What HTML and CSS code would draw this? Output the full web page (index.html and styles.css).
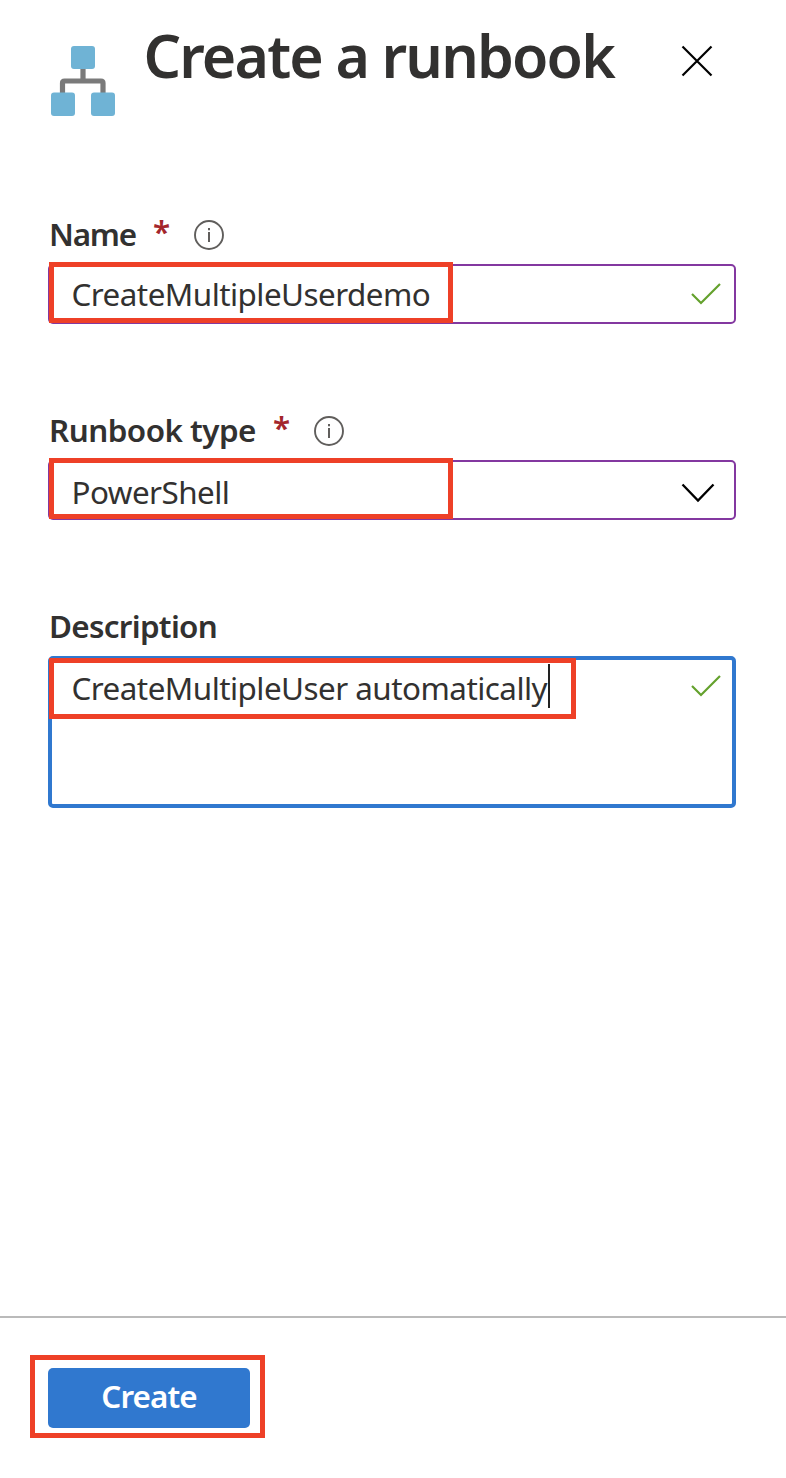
FILE: index.html
```html
<!DOCTYPE html>
<html lang="en">
<head>
<meta charset="utf-8">
<title>Create a runbook</title>
<link rel="stylesheet" href="styles.css">
</head>
<body>
<main class="panel">
  <header class="header">
    <svg class="logo" width="66" height="72" viewBox="0 0 66 72">
      <path d="M33 22V38M12.500 50V38Q12.500 36 14.500 36H51Q53 36 53 38V50" fill="none" stroke="#7a7a7a" stroke-width="5.200"/>
      <g fill="#6fb3d5">
        <rect x="21" y="1" width="24" height="23" rx="3"/>
        <rect x="1" y="47.500" width="24" height="23.500" rx="3"/>
        <rect x="41" y="47.500" width="24" height="23.500" rx="3"/>
      </g>
    </svg>
    <h1 class="title">Create a runbook</h1>
    <button class="close" aria-label="Close">
      <svg width="32" height="32" viewBox="0 0 32 32"><path d="M1.500 1.500L30.500 30.500M30.500 1.500L1.500 30.500" fill="none" stroke="#000" stroke-width="2.200"/></svg>
    </button>
  </header>
  <form class="form">
    <div class="field">
      <div class="label"><span class="label-name">Name</span><span class="required">*</span>
        <svg class="info" width="30" height="30" viewBox="0 0 30 30"><circle cx="15" cy="15" r="14" fill="none" stroke="#605e5c" stroke-width="1.900"/><path d="M15 12V22M15 8V10.300" stroke="#605e5c" stroke-width="2"/></svg>
      </div>
      <div class="control">
        <span class="value value-name">CreateMultipleUserdemo</span>
        <svg class="check" width="30" height="22" viewBox="0 0 30 22"><path d="M1 11L10 20L29 1" fill="none" stroke="#64a12d" stroke-width="2.200"/></svg>
        <span class="mark"></span>
      </div>
    </div>
    <div class="field">
      <div class="label"><span class="label-type">Runbook type</span><span class="required">*</span>
        <svg class="info" width="30" height="30" viewBox="0 0 30 30"><circle cx="15" cy="15" r="14" fill="none" stroke="#605e5c" stroke-width="1.900"/><path d="M15 12V22M15 8V10.300" stroke="#605e5c" stroke-width="2"/></svg>
      </div>
      <div class="control select">
        <span class="value value-type">PowerShell</span>
        <svg class="chevron" width="34" height="20" viewBox="0 0 34 20"><path d="M1.500 1.500L17 17.500L32.500 1.500" fill="none" stroke="#000" stroke-width="2.300"/></svg>
        <span class="mark"></span>
      </div>
    </div>
    <div class="field">
      <div class="label"><span class="label-desc">Description</span></div>
      <div class="control area">
        <span class="value value-desc">CreateMultipleUser automatically</span>
        <svg class="check" width="30" height="22" viewBox="0 0 30 22"><path d="M1 11L10 20L29 1" fill="none" stroke="#64a12d" stroke-width="2.200"/></svg>
        <span class="mark mark-wide"></span>
        <span class="caret"></span>
      </div>
    </div>
  </form>
  <footer class="footer">
    <div class="action-mark"><button class="create"><span class="create-text">Create</span></button></div>
  </footer>
</main>
</body>
</html>
```
FILE: styles.css
```css
* { box-sizing: border-box; }
body {
  margin: 0;
  background: #fff;
  color: #323130;
  font-family: "Noto Sans", "Open Sans", sans-serif;
  font-size: 31.4px;
}
svg { display: block; flex: none; }
button { border: 0; padding: 0; font: inherit; background: none; }
.panel { display: flex; flex-direction: column; width: 786px; height: 1478px; overflow: hidden; }
.header { display: flex; align-items: flex-start; height: 204px; padding: 0 73px 0 50px; }
.logo { margin-top: 45px; }
.title {
  margin: 15px 0 0 27.5px;
  font-size: 59px;
  font-weight: 600;
  line-height: 80px;
  letter-spacing: -1.85px;
  white-space: nowrap;
}
.close { margin: 45px 0 0 auto; }
.form { display: flex; flex: 1; flex-direction: column; gap: 76px; padding: 0 50px 0 48px; }
.label { display: flex; align-items: center; height: 60px; padding: 0 0 2px 1px; font-weight: 600; white-space: nowrap; }
.label-name { width: 88px; letter-spacing: -1.2px; }
.label-type { width: 208px; letter-spacing: -0.52px; }
.label-desc { letter-spacing: -0.7px; }
.required { width: 16px; margin: 0 0 5px 16px; color: #a4262c; }
.info { margin: 4px 0 0 25px; }
.control {
  position: relative;
  display: flex;
  align-items: center;
  justify-content: space-between;
  width: 688px;
  height: 60px;
  padding: 0 13px 0 21.5px;
  border: 2px solid #8338a0;
  border-radius: 5px;
}
.value { line-height: 56px; white-space: nowrap; letter-spacing: -0.53px; }
.select { padding: 3px 19px 0 21.5px; }
.chevron { margin-top: 2px; }
.area { align-items: flex-start; height: 152px; padding: 0 11px 0 19.5px; border: 4px solid #3078cf; }
.area .check { margin-top: 15px; }
.mark { position: absolute; left: -1px; top: -4px; width: 404px; height: 61px; border: 5px solid #ee4027; }
.mark-wide { left: -3px; top: -2px; width: 527px; }
.caret { position: absolute; left: 496px; top: 4px; width: 2px; height: 44px; background: #222; }
.footer { height: 162px; padding: 37px 30px 0; border-top: 2px solid #bababa; }
.action-mark { display: flex; width: 235px; height: 83px; padding: 8px 10px 0 13px; border: 5px solid #ee4027; }
.create { width: 202px; height: 60px; border-radius: 5px; background: #3078cf; color: #fff; font-weight: 600; line-height: 56px; padding-bottom: 4px; }
.create-text { letter-spacing: -0.9px; }
```
